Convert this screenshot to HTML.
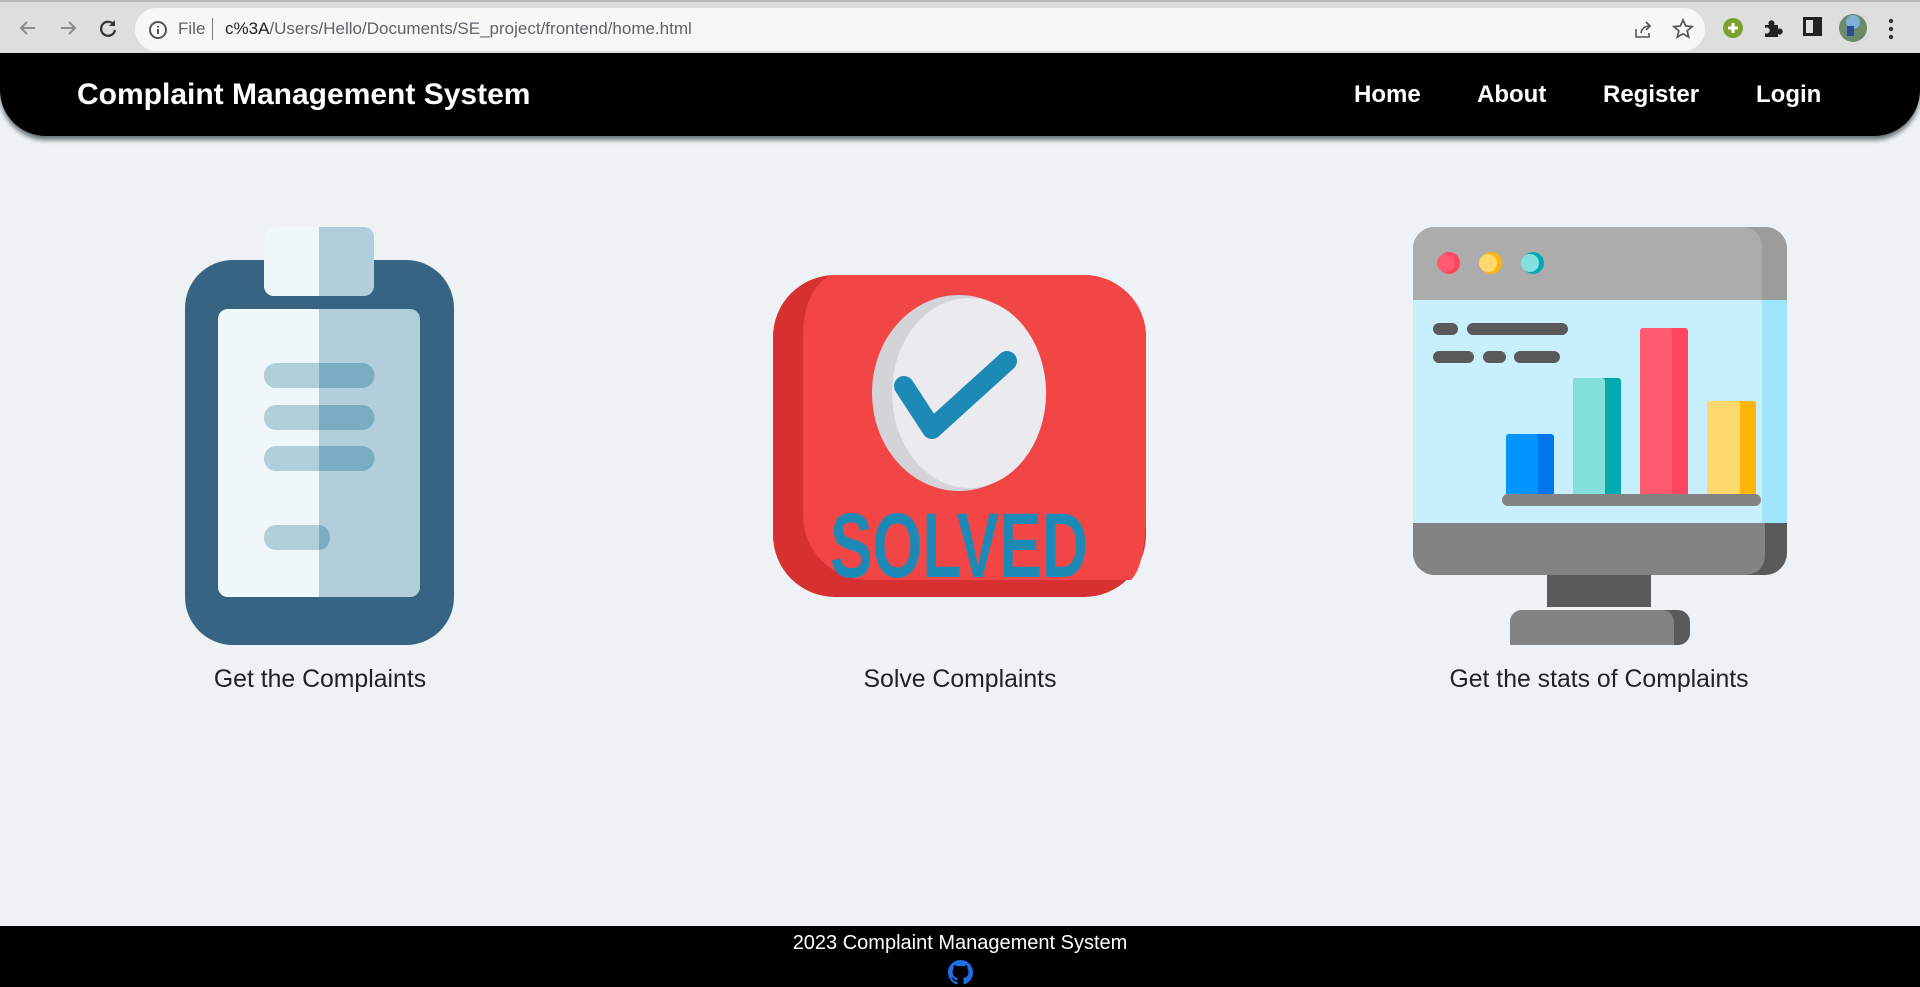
<!DOCTYPE html>
<html><head><meta charset="utf-8"><style>
*{margin:0;padding:0;box-sizing:border-box}
html,body{width:1920px;height:987px;overflow:hidden;background:#eef2f5;font-family:"Liberation Sans",Arial,sans-serif}
.chrome{position:absolute;left:0;top:0;width:1920px;height:54px;background:#dedede;border-top:2px solid #b8b8b8}
.url{position:absolute;left:135px;top:6px;width:1570px;height:43px;background:#f7f7f5;border-radius:22px}
.nav{position:absolute;left:0;top:53px;width:1920px;height:83px;background:#000;border-radius:0 0 46px 46px;box-shadow:0 4px 5px rgba(60,75,80,.75)}
.brand{position:absolute;left:77px;top:25px;color:#fff;font-weight:bold;font-size:30px}
.link{position:absolute;top:28px;color:#fff;font-weight:bold;font-size:24px}
.cap{position:absolute;top:666px;font-size:24.8px;color:#222;width:500px;text-align:center}
.foot{position:absolute;left:0;top:926px;width:1920px;height:61px;background:#000;color:#fff;text-align:center;font-size:20px;padding-top:6px}
svg{position:absolute}
</style></head><body>
<div class="chrome">
<svg style="left:16px;top:14px" width="24" height="24" viewBox="0 0 24 24"><path d="M19 12H6M11 6l-6 6 6 6" stroke="#8b8b8b" stroke-width="2" fill="none"/></svg>
<svg style="left:56px;top:14px" width="24" height="24" viewBox="0 0 24 24"><path d="M5 12h13M13 6l6 6-6 6" stroke="#8b8b8b" stroke-width="2" fill="none"/></svg>
<svg style="left:96px;top:14px" width="24" height="24" viewBox="0 0 24 24"><path d="M18 9a7 7 0 1 0 1 5" stroke="#333" stroke-width="2.2" fill="none"/><path d="M19 4v6h-6z" fill="#333"/></svg>
<div class="url">
<svg style="left:13px;top:12px" width="20" height="20" viewBox="0 0 20 20"><circle cx="10" cy="10" r="8" stroke="#555" stroke-width="2" fill="none"/><path d="M10 9v5M10 6v1.5" stroke="#555" stroke-width="2"/></svg>
<span style="position:absolute;left:43px;top:11px;font-size:17px;color:#5f6368">File</span>
<span style="position:absolute;left:77px;top:10px;width:1px;height:22px;background:#777"></span>
<span style="position:absolute;left:90px;top:11px;font-size:17px;color:#202124">c%3A<span style="color:#5f6368">/Users/Hello/Documents/SE_project/frontend/home.html</span></span>
<svg style="left:1497px;top:11px" width="22" height="22" viewBox="0 0 22 22"><path d="M4 10v8h13v-4M9 14c1-5 4-7 9-7M14 3l4 4-4 4" stroke="#555" stroke-width="1.6" fill="none"/></svg>
<svg style="left:1537px;top:10px" width="22" height="22" viewBox="0 0 22 22"><path d="M11 2l2.7 6 6.3.6-4.8 4.2 1.5 6.3L11 15.8 5.3 19.1l1.5-6.3L2 8.6 8.3 8z" stroke="#555" stroke-width="1.7" fill="none"/></svg>
</div>
<svg style="left:1722px;top:15px" width="22" height="22"><circle cx="11" cy="11" r="10" fill="#7aa22c"/><path d="M11 6v10M6 11h10" stroke="#fff" stroke-width="3"/></svg>
<svg style="left:1762px;top:15px" width="22" height="22" viewBox="0 0 22 22"><path d="M3 8h4a3 3 0 1 1 5 0h4v4a3 3 0 1 1 0 5v3H3v-4a3 3 0 1 0 0-5z" fill="#222"/></svg>
<svg style="left:1803px;top:15px" width="20" height="20"><rect x="1.5" y="1.5" width="16" height="16" fill="none" stroke="#222" stroke-width="3"/><rect x="10" y="2" width="8" height="16" fill="#222"/></svg>
<svg style="left:1839px;top:12px" width="28" height="28"><circle cx="14" cy="14" r="14" fill="#6a8a6a"/><circle cx="14" cy="8" r="7" fill="#7fb0d8"/><rect x="8" y="12" width="7" height="10" fill="#2a4a9a"/></svg>
<svg style="left:1888px;top:16px" width="6" height="22"><circle cx="3" cy="3" r="2.2" fill="#333"/><circle cx="3" cy="11" r="2.2" fill="#333"/><circle cx="3" cy="19" r="2.2" fill="#333"/></svg>
</div>
<div class="nav">
<div class="brand">Complaint Management System</div>
<div class="link" style="left:1354px">Home</div>
<div class="link" style="left:1477px">About</div>
<div class="link" style="left:1603px">Register</div>
<div class="link" style="left:1756px">Login</div>
</div>

<svg style="left:185px;top:227px" width="270" height="420" viewBox="0 0 270 420">
<rect x="0" y="33" width="269" height="385" rx="48" fill="#376482"/>
<rect x="79" y="0" width="110" height="69" rx="10" fill="#b1cfdb"/>
<path d="M89 0h45v69H89a10 10 0 0 1-10-10V10A10 10 0 0 1 89 0z" fill="#f0f7fa"/>
<rect x="33" y="82" width="202" height="288" rx="10" fill="#b1cfdb"/>
<path d="M43 82h91v288H43a10 10 0 0 1-10-10V92a10 10 0 0 1 10-10z" fill="#f0f7fa"/>
<g fill="#b1cfdb"><rect x="79" y="136" width="110" height="25" rx="12"/><rect x="79" y="178" width="110" height="25" rx="12"/><rect x="79" y="219" width="110" height="25" rx="12"/><rect x="79" y="298" width="66" height="25" rx="12"/></g>
<g fill="#7badc2"><path d="M134 136h43a12 12 0 0 1 0 25h-43z"/><path d="M134 178h43a12 12 0 0 1 0 25h-43z"/><path d="M134 219h43a12 12 0 0 1 0 25h-43z"/><path d="M134 298a11 12.5 0 0 1 0 25z"/></g>
</svg>

<svg style="left:773px;top:275px" width="374" height="323" viewBox="0 0 374 323">
<rect x="0" y="0" width="373" height="322" rx="62" fill="#d63031"/>
<path d="M58 0h253a62 62 0 0 1 62 62v170q0 58-15 73H95a65 65 0 0 1-65-65V62Q30 15 58 0z" fill="#f24646"/>
<ellipse cx="186" cy="118" rx="87" ry="98" fill="#d3d3d8"/>
<ellipse cx="196" cy="118" rx="77" ry="95" fill="#ebeaef"/>
<path d="M131 111l28 43 75-68" stroke="#1d8ab6" stroke-width="20" stroke-linecap="round" stroke-linejoin="round" fill="none"/>
<text x="57" y="302" textLength="258" lengthAdjust="spacingAndGlyphs" font-family="Liberation Sans, sans-serif" font-weight="bold" font-size="92" fill="#1d8ab6">SOLVED</text>
</svg>

<svg style="left:1413px;top:227px" width="374" height="420" viewBox="0 0 374 420">
<rect x="134" y="340" width="104" height="40" fill="#5a5a5a"/>
<rect x="97" y="383" width="180" height="35" rx="12" fill="#5a5a5a"/>
<path d="M109 383h140a12 12 0 0 1 12 12v23H97v-23a12 12 0 0 1 12-12z" fill="#838383"/>
<rect x="0" y="0" width="374" height="348" rx="22" fill="#5a5a5a"/>
<path d="M22 0h310a20 20 0 0 1 20 20v306q0 22-22 22H22A22 22 0 0 1 0 326V22A22 22 0 0 1 22 0z" fill="#838383"/>
<path d="M22 0h330a22 22 0 0 1 22 22v51H0V22A22 22 0 0 1 22 0z" fill="#9c9c9c"/>
<path d="M22 0h305q22 0 22 22v51H0V22A22 22 0 0 1 22 0z" fill="#acacac"/>
<rect x="0" y="73" width="374" height="223" fill="#9fe5fc"/>
<rect x="0" y="73" width="349" height="223" fill="#c8effe"/>
<circle cx="36" cy="36" r="11" fill="#ff4560"/><circle cx="33" cy="36" r="9" fill="#ff5a70"/>
<circle cx="78" cy="36" r="11" fill="#ffb40a"/><circle cx="75" cy="36" r="9" fill="#ffd86e"/>
<circle cx="120" cy="36" r="11" fill="#00aaaf"/><circle cx="117" cy="36" r="9" fill="#83e0dc"/>
<g stroke="#5a5a5a" stroke-width="12" stroke-linecap="round"><path d="M26 102h13M60 102h89M26 130h29M76 130h11M107 130h34"/></g>
<rect x="93" y="207" width="48" height="62" rx="3" fill="#0076ee"/><rect x="93" y="207" width="32" height="62" rx="3" fill="#0095ff"/>
<rect x="160" y="151" width="48" height="118" rx="3" fill="#00aaaf"/><rect x="160" y="151" width="32" height="118" rx="3" fill="#83e0dc"/>
<rect x="227" y="101" width="48" height="168" rx="3" fill="#ff4560"/><rect x="227" y="101" width="32" height="168" rx="3" fill="#ff5a70"/>
<rect x="294" y="174" width="49" height="95" rx="3" fill="#ffb40a"/><rect x="294" y="174" width="33" height="95" rx="3" fill="#ffd86e"/>
<rect x="89" y="267" width="259" height="12" rx="6" fill="#838383"/>
</svg>

<div class="cap" style="left:70px">Get the Complaints</div>
<div class="cap" style="left:710px">Solve Complaints</div>
<div class="cap" style="left:1349px">Get the stats of Complaints</div>

<div class="foot">2023 Complaint Management System
<svg style="left:948px;top:34px" width="25" height="25" viewBox="0 0 16 16"><path fill="#1f6feb" d="M8 0C3.58 0 0 3.58 0 8c0 3.54 2.29 6.53 5.47 7.590.4.07.55-.17.55-.38 0-.19-.01-.82-.01-1.49-2.010.37-2.53-.49-2.69-.94-.09-.23-.48-.94-.82-1.13-.28-.15-.68-.52-.01-.53.63-.01 1.080.58 1.230.82.72 1.21 1.870.87 2.330.66.07-.52.28-.87.51-1.07-1.78-.2-3.64-.89-3.64-3.95 0-.87.31-1.59.82-2.15-.08-.2-.36-1.02.08-2.12 0 0 .67-.21 2.2.82.64-.18 1.32-.27 2-.27.68 0 1.36.09 2 .27 1.53-1.04 2.2-.82 2.2-.82.44 1.1.16 1.92.08 2.12.51.56.82 1.27.82 2.15 0 3.07-1.87 3.75-3.65 3.95.29.25.54.73.54 1.48 0 1.07-.01 1.93-.01 2.2 0 .21.15.46.55.38A8.013 8.013 0 0016 8c0-4.42-3.58-8-8-8z"/></svg>
</div>
</body></html>
